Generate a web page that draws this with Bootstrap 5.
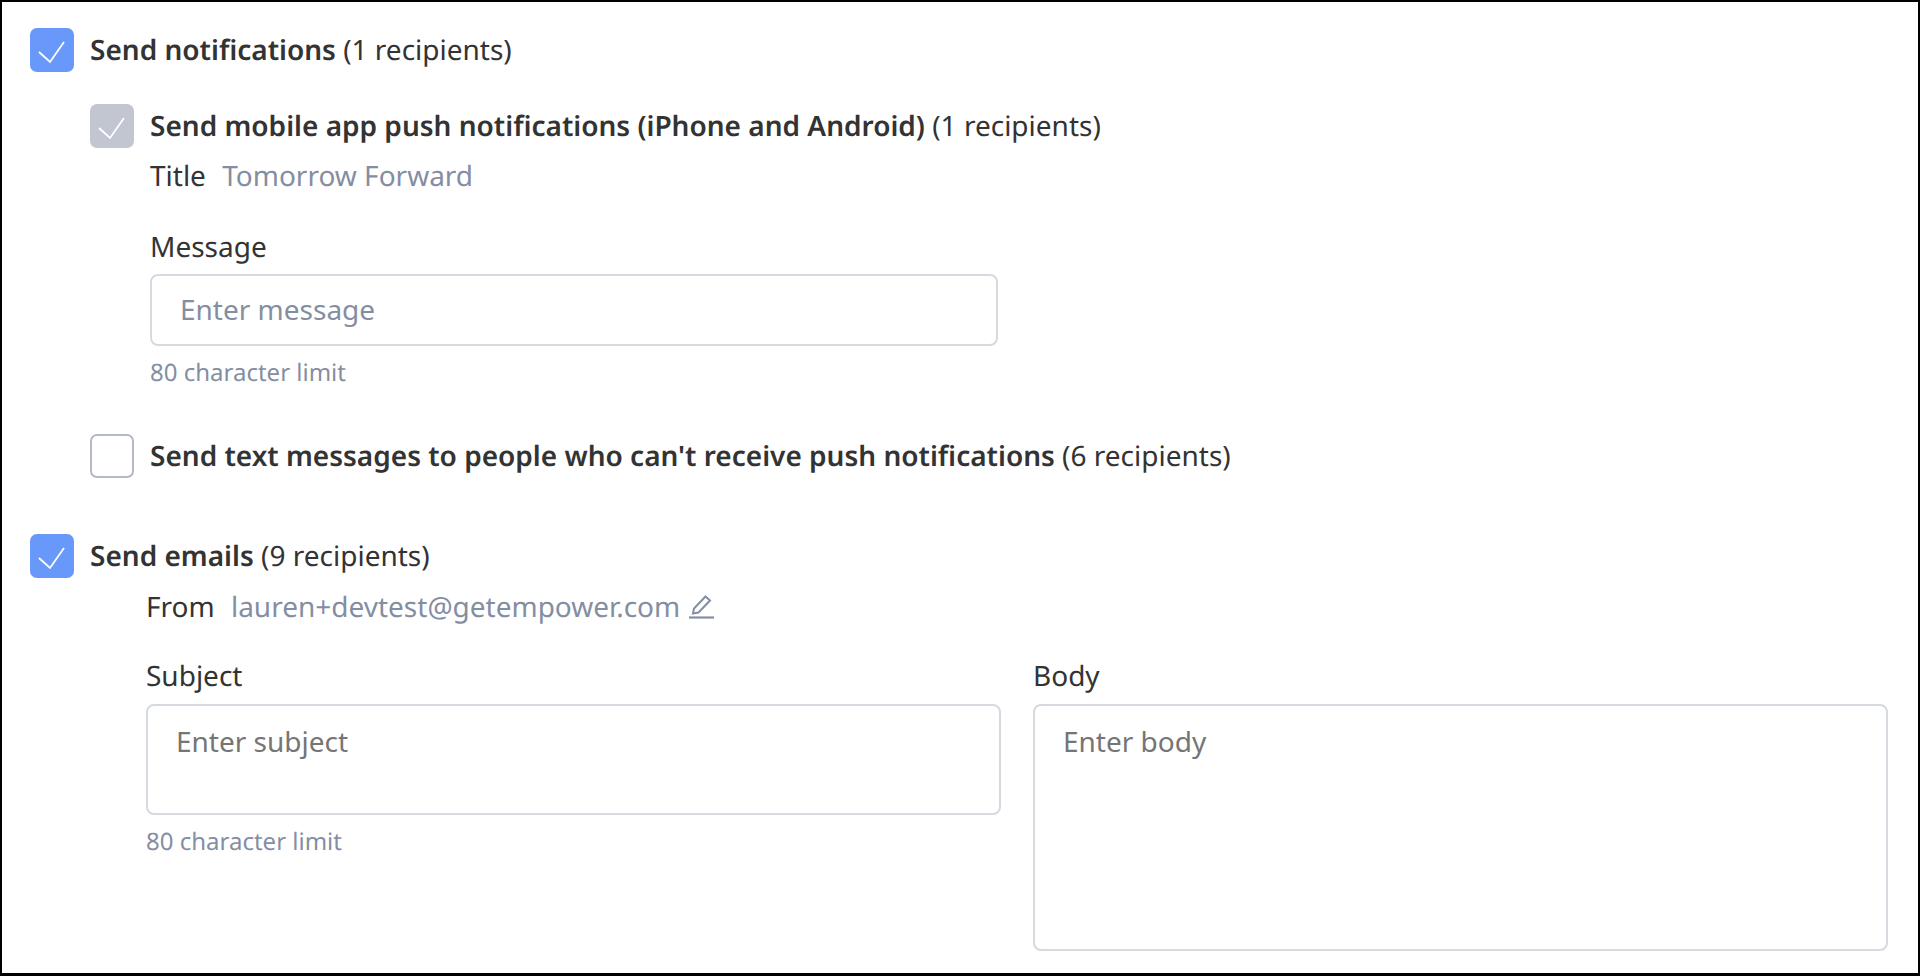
<!DOCTYPE html>
<html lang="en">
<head>
  <meta charset="UTF-8">
  <title>Send notifications</title>
  <meta name="viewport" content="width=device-width, initial-scale=1.0">
  <link href="https://cdn.jsdelivr.net/npm/bootstrap@5.3.0/dist/css/bootstrap.min.css" rel="stylesheet">
  <style>
    html, body { height: 100%; }
    body { font-family: "Noto Sans", sans-serif; font-size: 28px; line-height: 42px; color: #333; background: #fff; text-rendering: geometricPrecision; }
    .frame { height: 976px; border: 2px solid #000; border-bottom-width: 3px; padding: 26px 30px 0 28px; overflow: hidden; }
    .check-row { display: flex; align-items: center; gap: 16px; height: 44px; }
    .check-box { width: 44px; height: 44px; margin: 0; flex: none; border-radius: 6px; border: 2px solid #b3b9c6; }
    .check-box:checked { background-color: #6898f9; border-color: #6898f9; background-size: 32px; background-image: url("data:image/svg+xml,%3csvg xmlns='http://www.w3.org/2000/svg' viewBox='0 0 32 32'%3e%3cpath fill='none' stroke='%23fff' stroke-width='1.8' d='M3 18l11 10L28 8'/%3e%3c/svg%3e"); }
    .check-box:disabled { opacity: 1; }
    .check-box.off:checked { background-color: #c1c6d0; border-color: #c1c6d0; }
    .row-sub { margin-left: 60px; margin-top: 32px; }
    .row-text { margin-left: 60px; margin-top: 46px; }
    .row-email { margin-top: 56px; }
    .push-title { margin-left: 120px; margin-top: 7px; }
    .push-msg { margin-left: 120px; margin-top: 32px; }
    .email-from { margin-left: 116px; margin-top: 8px; }
    .email-cols { display: flex; gap: 32px; margin-left: 116px; margin-top: 30px; }
    .muted-val { color: #848ea2; margin-left: 9px; }
    .field-label { font-size: 28px; line-height: 36px; margin: 0 0 9px; color: #333; }
    .email-cols .field-label { margin-bottom: 10px; }
    .text-field { border: 2px solid #d5d9e0; border-radius: 8px; font-size: 28px; color: #333; box-shadow: none; }
    .text-field::placeholder { color: #848ea2; }
    .plain-ph::placeholder { color: #757575; }
    .hint-text { font-size: 24px; line-height: 30px; color: #848ea2; margin-top: 12px; }
    .msg-field { width: 848px; height: 72px; padding: 0 28px 2px; }
    .subject-field { height: 111px; padding: 14px 28px; resize: none; }
    .body-field { height: 247px; padding: 14px 28px; resize: none; }
    .email-cols > div { flex: none; }
    .col-subject { width: 855px; }
    .col-body { width: 855px; }
    .edit-icon { width: 28px; height: 28px; margin-left: 1px; vertical-align: -3px; }
  </style>
</head>
<body>
  <div class="frame">
    <div class="check-row">
      <input class="form-check-input check-box" type="checkbox" checked>
      <div><span class="fw-semibold">Send notifications</span> (1 recipients)</div>
    </div>

    <div class="check-row row-sub">
      <input class="form-check-input check-box off" type="checkbox" checked disabled>
      <div><span class="fw-semibold">Send mobile app push notifications (iPhone and Android)</span> (1 recipients)</div>
    </div>
    <div class="push-title">Title <span class="muted-val">Tomorrow Forward</span></div>
    <div class="push-msg">
      <label class="field-label d-block">Message</label>
      <input class="form-control text-field msg-field" type="text" placeholder="Enter message">
      <div class="hint-text">80 character limit</div>
    </div>

    <div class="check-row row-text">
      <input class="form-check-input check-box" type="checkbox">
      <div><span class="fw-semibold">Send text messages to people who can't receive push notifications</span> (6 recipients)</div>
    </div>

    <div class="check-row row-email">
      <input class="form-check-input check-box" type="checkbox" checked>
      <div><span class="fw-semibold">Send emails</span> (9 recipients)</div>
    </div>
    <div class="email-from">
      From <span class="muted-val">lauren+devtest@getempower.com</span>
      <svg class="edit-icon" viewBox="0 0 28 28" fill="none" stroke="#848ea2" stroke-width="2"><path d="M5 21.500l1-5L17.500 4.500l4.500 4L10.500 20.500z"/><path d="M1 25.500h25" stroke-width="2.200"/></svg>
    </div>
    <div class="email-cols">
      <div class="col-subject">
        <label class="field-label d-block">Subject</label>
        <textarea class="form-control text-field plain-ph subject-field" placeholder="Enter subject"></textarea>
        <div class="hint-text">80 character limit</div>
      </div>
      <div class="col-body">
        <label class="field-label d-block">Body</label>
        <textarea class="form-control text-field plain-ph body-field" placeholder="Enter body"></textarea>
      </div>
    </div>
  </div>
  <script src="https://cdn.jsdelivr.net/npm/bootstrap@5.3.0/dist/js/bootstrap.bundle.min.js"></script>
</body>
</html>
